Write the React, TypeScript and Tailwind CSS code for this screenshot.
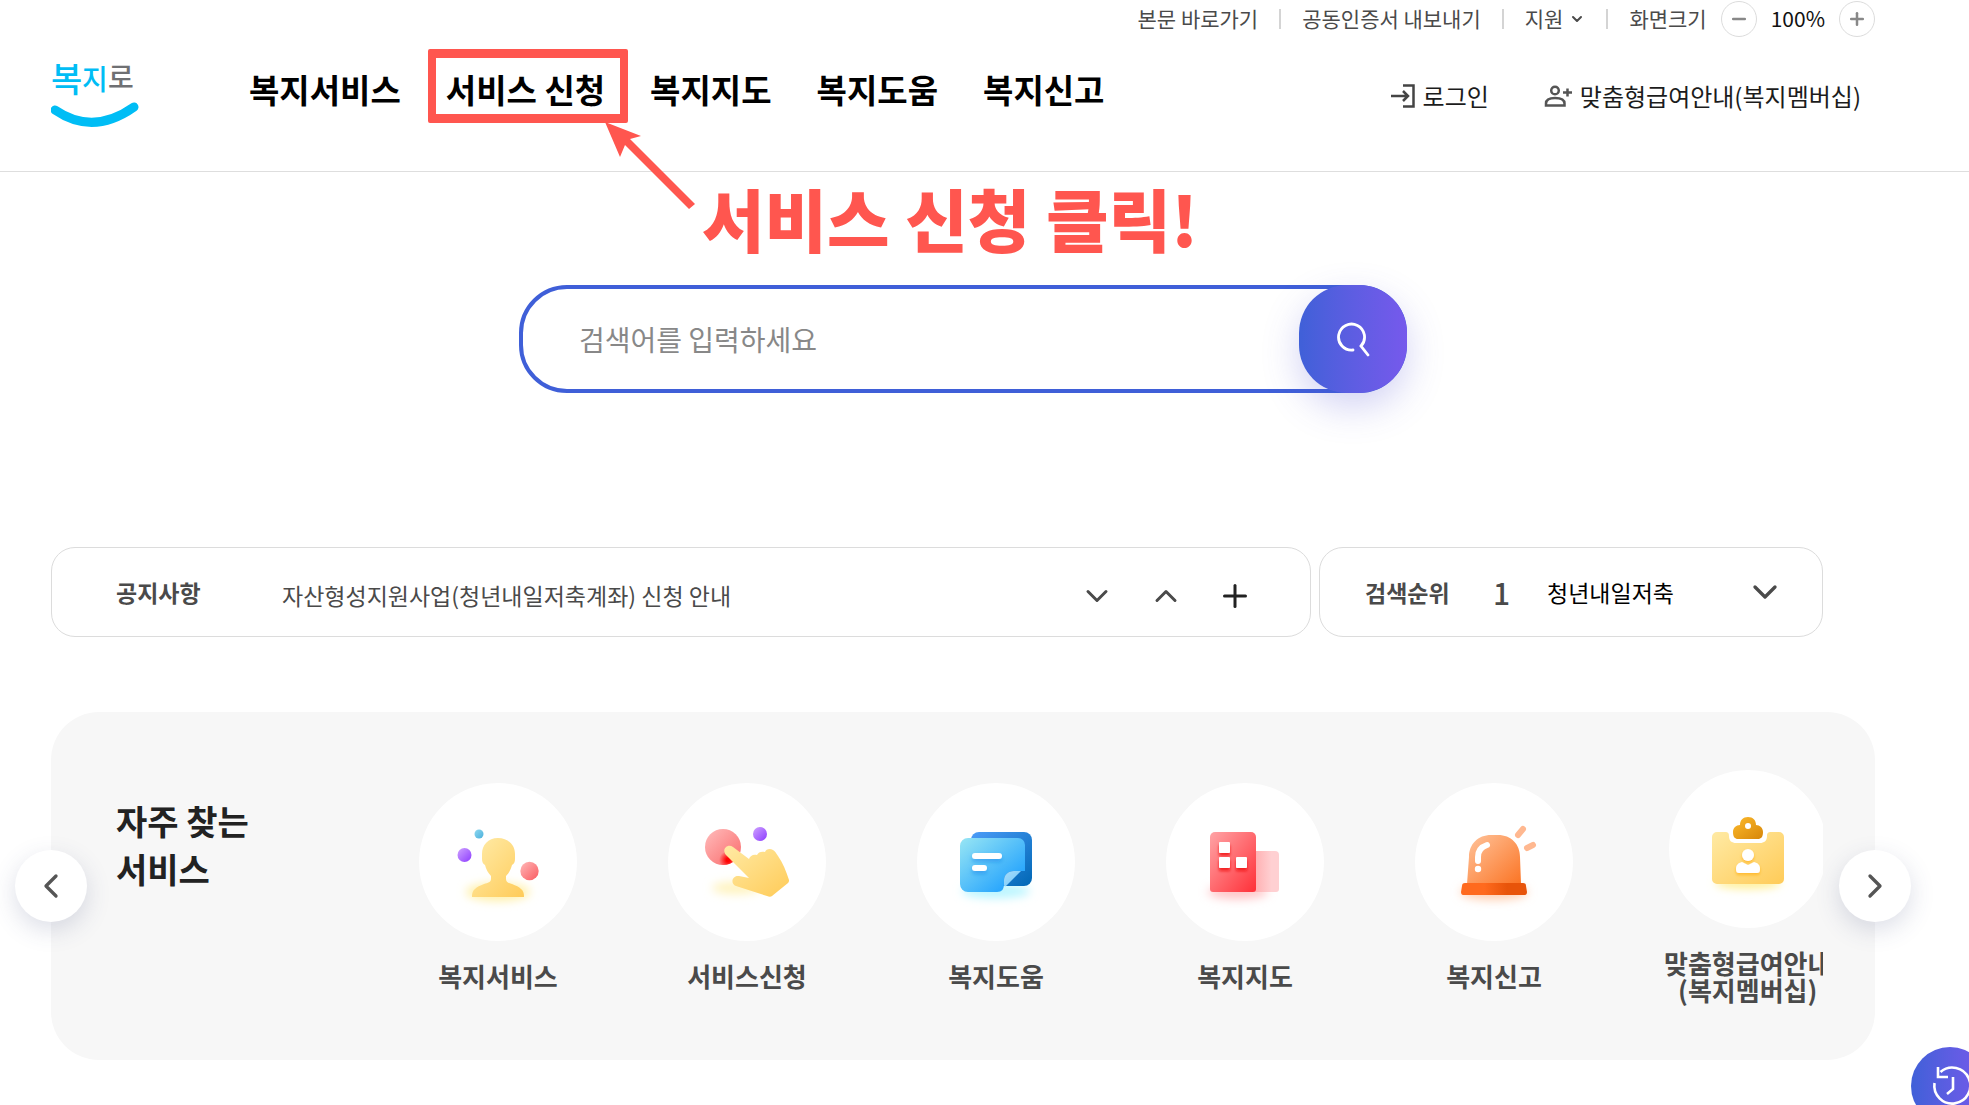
import type { ReactNode } from "react";
import { ChevronDown, ChevronLeft, ChevronRight, ChevronUp, Minus, Plus } from "lucide-react";

const gradient = (id: string, from: string, to: string) => (
  <linearGradient id={id} x1="0" y1="0" x2="1" y2="1">
    <stop offset="0" stopColor={from} />
    <stop offset="1" stopColor={to} />
  </linearGradient>
);

function Disc({ children }: { children: ReactNode }) {
  return (
    <span className="block size-[158px] rounded-full bg-white">
      <svg viewBox="0 0 158 158" className="size-full" fill="none" aria-hidden="true">
        {children}
      </svg>
    </span>
  );
}

function PersonIcon() {
  return (
    <Disc>
      <defs>
        {gradient("p-body", "#ffecaa", "#ffcb58")}
        {gradient("p-blue", "#8ed8f0", "#4bb0dc")}
        {gradient("p-violet", "#cfa2ff", "#8d3cff")}
        {gradient("p-red", "#ffb9b9", "#fa5a60")}
        <filter id="p-glow" x="-50%" y="-100%" width="200%" height="300%"><feGaussianBlur stdDeviation="5" /></filter>
      </defs>
      <ellipse cx="79" cy="109" rx="32" ry="9" fill="#fff0a8" filter="url(#p-glow)" />
      <path d="M79 55c-10 0-16 7-16 16v5c0 3 1 5 3 6 1 4 3 8 6 11v3c0 3-3 4-7 5-8 3-12 6-12 12 0 1 0 1 1 1h50c1 0 1 0 1-1 0-6-4-9-12-12-4-1-6-2-6-5v-3c3-3 5-7 6-11 2-1 3-3 3-6v-5c0-9-7-16-17-16z" fill="url(#p-body)" />
      <circle cx="60" cy="51" r="4.5" fill="url(#p-blue)" />
      <circle cx="45.500" cy="72" r="7" fill="url(#p-violet)" />
      <circle cx="110.500" cy="88" r="9.200" fill="url(#p-red)" />
    </Disc>
  );
}

function TouchIcon() {
  return (
    <Disc>
      <defs>
        {gradient("t-hand", "#ffeaa4", "#ffcb58")}
        {gradient("t-violet", "#cfa2ff", "#8d3cff")}
        {gradient("t-red", "#ffbcbc", "#fa6a6a")}
        <radialGradient id="t-hot"><stop offset="0.200" stopColor="#ff0505" /><stop offset="1" stopColor="#ff0505" stopOpacity="0" /></radialGradient>
        <clipPath id="t-clip"><circle cx="55" cy="64" r="18" /></clipPath>
        <filter id="t-glow" x="-50%" y="-100%" width="200%" height="300%"><feGaussianBlur stdDeviation="5" /></filter>
      </defs>
      <ellipse cx="68" cy="105" rx="24" ry="6" fill="#fff3bc" filter="url(#t-glow)" />
      <circle cx="55" cy="64" r="18" fill="url(#t-red)" />
      <circle cx="60" cy="77" r="9" fill="url(#t-hot)" clipPath="url(#t-clip)" />
      <circle cx="92" cy="51" r="7" fill="url(#t-violet)" />
      <path d="M65 64c-5-4-12 2-7 8l23 23-10-2c-7-1-9 8-3 10l31 10c2 1 4 1 5 0l16-13c1-1 1-2 1-3-3-9-6-17-11-24-2-3-3-5-5-6-3-2-7-1-8 2-3-1-7 0-8 3-4-1-7 1-8 4z" fill="url(#t-hand)" />
    </Disc>
  );
}

function NotesIcon() {
  return (
    <Disc>
      <defs>
        {gradient("n-back", "#4b9cf8", "#0067b5")}
        {gradient("n-front", "#98e6f4", "#0f97ff")}
        {gradient("n-fold", "#a8dcfa", "#70c8fa")}
        <filter id="n-glow" x="-50%" y="-100%" width="200%" height="300%"><feGaussianBlur stdDeviation="5" /></filter>
        <filter id="n-line" x="-50%" y="-50%" width="200%" height="250%"><feDropShadow dx="0" dy="3" stdDeviation="2" floodColor="#0f80e8" floodOpacity="0.500" /></filter>
      </defs>
      <ellipse cx="79" cy="108" rx="34" ry="7" fill="#b8f5ff" filter="url(#n-glow)" />
      <rect x="54" y="49" width="61" height="54" rx="8" fill="url(#n-back)" />
      <path d="M51 55h50a7 7 0 0 1 7 7v26H97c-6 0-10 4-10 9v4c0 5-2 8-7 8H51a8 8 0 0 1-8-8V63a8 8 0 0 1 8-8z" fill="url(#n-front)" />
      <path d="M104 88 89 103c-1 1-2 0-2-1v-5c0-5 4-9 10-9z" fill="url(#n-fold)" />
      <g fill="#fff" filter="url(#n-line)">
        <rect x="55" y="70" width="30" height="6" rx="3" />
        <rect x="55" y="82" width="15" height="6" rx="3" />
      </g>
    </Disc>
  );
}

function BuildingIcon() {
  return (
    <Disc>
      <defs>
        {gradient("b-main", "#ffa4a6", "#ff3038")}
        <linearGradient id="b-side"><stop offset="0" stopColor="#ffaeb0" /><stop offset="0.700" stopColor="#ffd0d2" /></linearGradient>
        <filter id="b-glow" x="-50%" y="-100%" width="200%" height="300%"><feGaussianBlur stdDeviation="5" /></filter>
        <filter id="b-win" x="-50%" y="-50%" width="200%" height="200%"><feDropShadow dx="0" dy="3" stdDeviation="1.500" floodColor="#f00810" floodOpacity="0.800" /></filter>
      </defs>
      <ellipse cx="72" cy="109" rx="30" ry="7" fill="#ffc4c6" filter="url(#b-glow)" />
      <path d="M88 68h21a4 4 0 0 1 4 4v34a3 3 0 0 1-3 3H88z" fill="url(#b-side)" />
      <path d="M49 49h36a5 5 0 0 1 5 5v52a3 3 0 0 1-3 3H47a3 3 0 0 1-3-3V54a5 5 0 0 1 5-5z" fill="url(#b-main)" />
      <g fill="#fff" filter="url(#b-win)">
        <rect x="53" y="59" width="11" height="11" rx="1" />
        <rect x="53" y="74" width="11" height="11" rx="1" />
        <rect x="70" y="74" width="11" height="11" rx="1" />
      </g>
    </Disc>
  );
}

function SirenIcon() {
  return (
    <Disc>
      <defs>
        {gradient("s-dome", "#ffc49c", "#fb7424")}
        <linearGradient id="s-base"><stop offset="0.350" stopColor="#ff6a1e" /><stop offset="0.700" stopColor="#e8540a" /></linearGradient>
        <filter id="s-glow" x="-50%" y="-100%" width="200%" height="300%"><feGaussianBlur stdDeviation="5" /></filter>
      </defs>
      <ellipse cx="79" cy="109" rx="34" ry="8" fill="#ffd0b4" filter="url(#s-glow)" />
      <path d="M76 52h7c13 0 22 9 22 22l1 27H52l2-27c0-13 9-22 22-22z" fill="url(#s-dome)" />
      <path d="M50 100h58c2 0 3 1 3 3l1 6c0 2-1 3-2 3H48c-1 0-2-1-2-3l1-6c0-2 1-3 3-3z" fill="url(#s-base)" />
      <path d="M63 78v-4c0-6 3-10 9-12" stroke="#fff" strokeWidth="6" strokeLinecap="round" />
      <circle cx="63" cy="86" r="3.200" fill="#fff" />
      <path d="m103 52 5-6M112 65l6-3" stroke="#ffb890" strokeWidth="6" strokeLinecap="round" />
    </Disc>
  );
}

function BadgeIcon() {
  return (
    <Disc>
      <defs>
        {gradient("c-board", "#ffeaa4", "#ffcb58")}
        {gradient("c-clip", "#fdbb2d", "#d78608")}
        <filter id="c-glow" x="-50%" y="-100%" width="200%" height="300%"><feGaussianBlur stdDeviation="4" /></filter>
        <filter id="c-man" x="-50%" y="-50%" width="200%" height="200%"><feDropShadow dx="0" dy="2" stdDeviation="1.500" floodColor="#ffae10" floodOpacity="0.700" /></filter>
      </defs>
      <ellipse cx="79" cy="113" rx="33" ry="6" fill="#fff09a" filter="url(#c-glow)" />
      <path d="M48 62h8c3 0 4 1 4 4 0 5 3 7 7 7h24c4 0 7-2 7-7 0-3 1-4 4-4h8a5 5 0 0 1 5 5v42a5 5 0 0 1-5 5H48a5 5 0 0 1-5-5V67a5 5 0 0 1 5-5z" fill="url(#c-board)" />
      <path fillRule="evenodd" d="M79 47c5 0 8 3 8 8 4 0 7 3 7 7 0 5-2 7-5 7H69c-3 0-5-2-5-7 0-4 3-7 7-7 0-5 3-8 8-8zm0 6a3 3 0 1 0 0 6 3 3 0 0 0 0-6z" fill="url(#c-clip)" />
      <g fill="#fff" filter="url(#c-man)">
        <circle cx="79" cy="85" r="6" />
        <path d="M73 92l6 3 6-3c4 1 6 3 6 7 0 3-1 4-3 4H70c-2 0-3-1-3-4 0-4 2-6 6-7z" />
      </g>
    </Disc>
  );
}

const menu = ["복지서비스", "서비스 신청", "복지지도", "복지도움", "복지신고"];

const services = [
  { lines: ["복지서비스"], icon: <PersonIcon /> },
  { lines: ["서비스신청"], icon: <TouchIcon /> },
  { lines: ["복지도움"], icon: <NotesIcon /> },
  { lines: ["복지지도"], icon: <BuildingIcon /> },
  { lines: ["복지신고"], icon: <SirenIcon /> },
  { lines: ["맞춤형급여안내", "(복지멤버십)"], icon: <BadgeIcon /> },
];

function Logo() {
  return (
    <a href="#home" aria-label="복지로" className="block shrink-0">
      <svg viewBox="0 0 88 78" className="h-[78px] w-[88px]" aria-hidden="true">
        <g fontWeight="500" fontFamily="'Noto Sans CJK KR', sans-serif">
          <text x="0" y="42" fontSize="34" fill="#00bdf5">복</text>
          <text x="31" y="40" fontSize="28" fill="#00bdf5">지</text>
          <text x="57" y="38" fontSize="28" fill="#6f7073">로</text>
        </g>
        <path d="M4 60q38 26 79-3" fill="none" stroke="#00bdf5" strokeWidth="9" strokeLinecap="round" />
      </svg>
    </a>
  );
}

function Divider() {
  return <span className="h-5 w-0.5 bg-[#d4d4d4]" aria-hidden="true" />;
}

function Header() {
  return (
    <header className="border-b border-[#dedede] pr-[94px] pl-[51px]">
      <div className="flex h-[38px] items-center justify-end text-[21px] text-[#4a4a4a]">
        <a href="#main">본문 바로가기</a>
        <span className="mx-[21px] flex"><Divider /></span>
        <a href="#cert">공동인증서 내보내기</a>
        <span className="mx-[21px] flex"><Divider /></span>
        <button type="button" className="flex items-center gap-1.5">
          지원
          <ChevronDown className="size-4" strokeWidth={3} />
        </button>
        <span className="mx-[21px] flex"><Divider /></span>
        <span>화면크기</span>
        <button type="button" aria-label="축소" className="ml-3.5 grid size-9 place-items-center rounded-full border border-[#dcdcdc]">
          <Minus className="size-5 text-[#888]" strokeWidth={3} />
        </button>
        <span className="mx-3.5 text-[#111]">100%</span>
        <button type="button" aria-label="확대" className="grid size-9 place-items-center rounded-full border border-[#dcdcdc]">
          <Plus className="size-5 text-[#888]" strokeWidth={3} />
        </button>
      </div>
      <div className="flex h-[133px] items-start justify-between">
        <div className="flex items-start pt-3">
          <Logo />
          <nav aria-label="주 메뉴" className="ml-[110px] flex gap-[45px] pt-[15px] text-[33px] leading-[48px] font-bold text-black">
            {menu.map((label, i) => (
              <a key={label} href={`#menu-${i}`} className="relative block whitespace-nowrap">
                {label}
                {i === 1 && (
                  <>
                    <span className="absolute -top-4 -right-[23px] -bottom-[10px] -left-[18px] rounded-xs border-x-8 border-y-[9px] border-[#ff564f]" />
                    <svg viewBox="0 0 90 88" className="absolute top-[57px] left-[159px] h-[88px] w-[90px] max-w-none" aria-hidden="true">
                      <path d="M0 0 36 14 25 17 90 82 84 87 20 23 15 35z" fill="#ff564f" />
                    </svg>
                  </>
                )}
              </a>
            ))}
          </nav>
        </div>
        <div className="flex items-center gap-[55px] pt-[42px] pr-3.5 text-[24px] leading-8 text-[#1c1c1c]">
          <a href="#login" className="flex items-center gap-2">
            <svg viewBox="0 0 24 24" className="size-6" fill="none" stroke="#444" strokeWidth="2.500" aria-hidden="true">
              <path d="M12 1.500h10.500v21H12M0 12h17M12 7l5 5-5 5" />
            </svg>
            로그인
          </a>
          <a href="#membership" className="flex items-center gap-2">
            <svg viewBox="0 0 28 24" className="h-6 w-7" fill="none" stroke="#555" strokeWidth="2.500" aria-hidden="true">
              <circle cx="11" cy="6.500" r="3.800" />
              <path d="M2 21.500v-2c0-4 4-5.500 9-5.500s9.500 1.500 9.500 5.500v2zM23.500 4.500v8M19 8.500h9" />
            </svg>
            맞춤형급여안내(복지멤버십)
          </a>
        </div>
      </div>
    </header>
  );
}

function Search() {
  return (
    <form className="mx-auto flex h-[108px] w-full max-w-[888px] rounded-[48px] border-4 border-[#3f5fd8]" onSubmit={(e) => e.preventDefault()}>
      <input
        type="text"
        aria-label="검색어"
        placeholder="검색어를 입력하세요"
        className="min-w-0 flex-1 bg-transparent pl-[56px] text-[28px] text-[#222] outline-none placeholder:text-[#888]"
      />
      <button type="submit" aria-label="검색" className="-m-1 grid size-[108px] shrink-0 place-items-center rounded-[48px] bg-linear-to-r from-[#3f60d8] to-[#7659ec] shadow-[0_14px_36px_rgba(80,80,210,0.25)]">
        <svg viewBox="0 0 34 36" className="h-9 w-[34px]" fill="none" stroke="#fff" strokeWidth="2.800" strokeLinecap="round" aria-hidden="true">
          <path d="M17 29A13 13 0 1 1 25 25L32 34" />
        </svg>
      </button>
    </form>
  );
}

function InfoRow() {
  return (
    <div className="mr-[52px] flex gap-2 text-[#4a4a4a]">
      <section className="flex h-[90px] min-w-0 flex-1 items-center rounded-3xl border border-[#dcdcdc] pr-[57px] pl-[64px]">
        <h2 className="w-[166px] shrink-0 text-[23px] font-bold">공지사항</h2>
        <a href="#notice" className="min-w-0 flex-1 truncate pt-1.5 text-[23px]">자산형성지원사업(청년내일저축계좌) 신청 안내</a>
        <div className="flex gap-[33px] pt-2">
          <button type="button" aria-label="다음 공지"><ChevronDown className="size-9" strokeWidth={2} /></button>
          <button type="button" aria-label="이전 공지"><ChevronUp className="size-9" strokeWidth={2} /></button>
          <button type="button" aria-label="공지 더보기"><Plus className="size-9 text-[#222]" strokeWidth={2} /></button>
        </div>
      </section>
      <section className="flex h-[90px] w-[504px] items-center rounded-3xl border border-[#dcdcdc] pr-[37px] pl-[45px]">
        <h2 className="w-[128px] shrink-0 text-[23px] font-bold">검색순위</h2>
        <span className="w-[54px] shrink-0 text-[30px] leading-8 font-medium">1</span>
        <a href="#rank" className="w-[128px] overflow-hidden text-[23px] whitespace-nowrap text-black">청년내일저축계좌</a>
        <button type="button" aria-label="검색순위 펼치기" className="ml-auto"><ChevronDown className="size-10" strokeWidth={2} /></button>
      </section>
    </div>
  );
}

function Services() {
  return (
    <section className="relative flex h-[348px] rounded-[48px] bg-[#f7f7f7] pr-[52px] pl-[65px]">
      <h2 className="w-[303px] shrink-0 pt-[85px] text-[34px] leading-[48px] font-bold text-[#222]">
        자주 찾는
        <br />
        서비스
      </h2>
      <ul className="flex min-w-0 flex-1 items-center gap-[91px] overflow-hidden">
        {services.map(({ lines, icon }) => (
          <li key={lines[0]} className="shrink-0">
            <a href={`#${lines[0]}`} className="flex flex-col items-center gap-[21px]">
              {icon}
              <span className="text-center text-[26px] leading-[27px] font-bold text-[#4a4a4a]">
                {lines.map((line) => (
                  <span key={line} className="block">{line}</span>
                ))}
              </span>
            </a>
          </li>
        ))}
      </ul>
      <button type="button" aria-label="이전" className="absolute top-[138px] -left-9 grid size-[72px] place-items-center rounded-full bg-white text-[#555] shadow-[0_8px_24px_rgba(60,70,120,0.18)]">
        <ChevronLeft className="h-12 w-10" strokeWidth={2} />
      </button>
      <button type="button" aria-label="다음" className="absolute top-[138px] -right-9 grid size-[72px] place-items-center rounded-full bg-white text-[#555] shadow-[0_8px_24px_rgba(60,70,120,0.18)]">
        <ChevronRight className="h-12 w-10" strokeWidth={2} />
      </button>
    </section>
  );
}

export default function App() {
  return (
    <div className="min-h-screen overflow-hidden bg-white font-['Noto_Sans_CJK_KR',sans-serif]">
      <Header />
      <main className="flex flex-col pr-[94px] pb-11 pl-[51px]">
        <p className="ml-[651px] pt-0.5 text-[68px] leading-[88px] font-black whitespace-nowrap text-[#ff564f]">서비스 신청 클릭!</p>
        <div className="mt-[23px]">
          <Search />
        </div>
        <div className="mt-[154px]">
          <InfoRow />
        </div>
        <div className="mt-[75px]">
          <Services />
        </div>
      </main>
      <button type="button" aria-label="최근 이용 내역" className="fixed -right-5 -bottom-5 size-[78px] rounded-full bg-linear-to-r from-[#3f60d8] to-[#7659ec]">
        <svg viewBox="0 0 78 78" className="size-full" fill="none" stroke="#fff" strokeWidth="2.600" aria-hidden="true">
          <path d="M23.500 36a18 18 0 1 0 6-11M27 20v10h10M42 30v12l-6 5" />
        </svg>
      </button>
    </div>
  );
}
